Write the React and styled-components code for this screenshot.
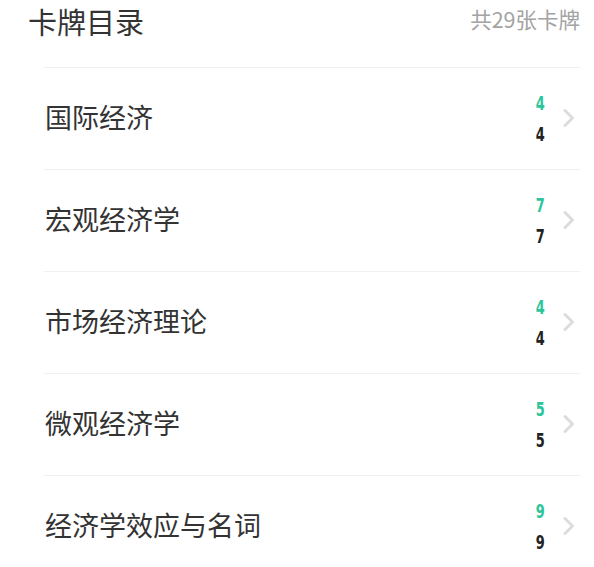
import React from "react";
import styled, { createGlobalStyle } from "styled-components";

const GlobalStyle = createGlobalStyle`
  body {
    margin: 0;
    background: #ffffff;
    font-family: "Noto Sans CJK SC", "Noto Sans", sans-serif;
  }
`;

const Page = styled.div`
  width: 594px;
`;

const Header = styled.div`
  display: flex;
  justify-content: space-between;
  align-items: flex-start;
  height: 40px;
  padding: 0 14px 0 28px;
`;

const Title = styled.span`
  font-size: 29px;
  color: #333333;
  line-height: 1.45;
`;

const Total = styled.span`
  font-size: 21.5px;
  color: #a3a3a3;
  line-height: 1.45;
  margin-top: 3px;
`;

const List = styled.div`
  margin: 27px 14px 0 44px;
`;

const Row = styled.div`
  display: flex;
  align-items: center;
  height: 102px;
  box-sizing: border-box;
  border-top: 1px solid #f0f0f0;
`;

const Name = styled.span`
  flex: 1;
  font-size: 27px;
  color: #333333;
  padding-left: 1px;
  margin-bottom: 5px;
`;

const Counts = styled.div`
  display: flex;
  flex-direction: column;
  align-items: center;
  gap: 15px;
  width: 12px;
`;

const Count = styled.span`
  font-family: "Liberation Sans Narrow", "DejaVu Sans Condensed", sans-serif;
  font-weight: 700;
  font-size: 20px;
  line-height: 16px;
  transform: scaleX(0.72);
  color: ${(props) => (props.done ? "#2cc59b" : "#222222")};
`;

const Chevron = styled.svg`
  margin-left: 16px;
  margin-right: 4px;
  margin-bottom: 2px;
`;

const decks = [
  { name: "国际经济", done: 4, total: 4 },
  { name: "宏观经济学", done: 7, total: 7 },
  { name: "市场经济理论", done: 4, total: 4 },
  { name: "微观经济学", done: 5, total: 5 },
  { name: "经济学效应与名词", done: 9, total: 9 },
];

const App = () => {
  return (
    <Page>
      <GlobalStyle />
      <Header>
        <Title>卡牌目录</Title>
        <Total>共29张卡牌</Total>
      </Header>
      <List>
        {decks.map((deck) => (
          <Row key={deck.name}>
            <Name>{deck.name}</Name>
            <Counts>
              <Count done>{deck.done}</Count>
              <Count>{deck.total}</Count>
            </Counts>
            <Chevron width="14" height="20" viewBox="0 0 14 20">
              <polyline
                points="3,2.5 10.5,10 3,17.5"
                fill="none"
                stroke="#dcdcdc"
                strokeWidth="3"
                strokeLinecap="round"
                strokeLinejoin="round"
              />
            </Chevron>
          </Row>
        ))}
      </List>
    </Page>
  );
};

export default App;
